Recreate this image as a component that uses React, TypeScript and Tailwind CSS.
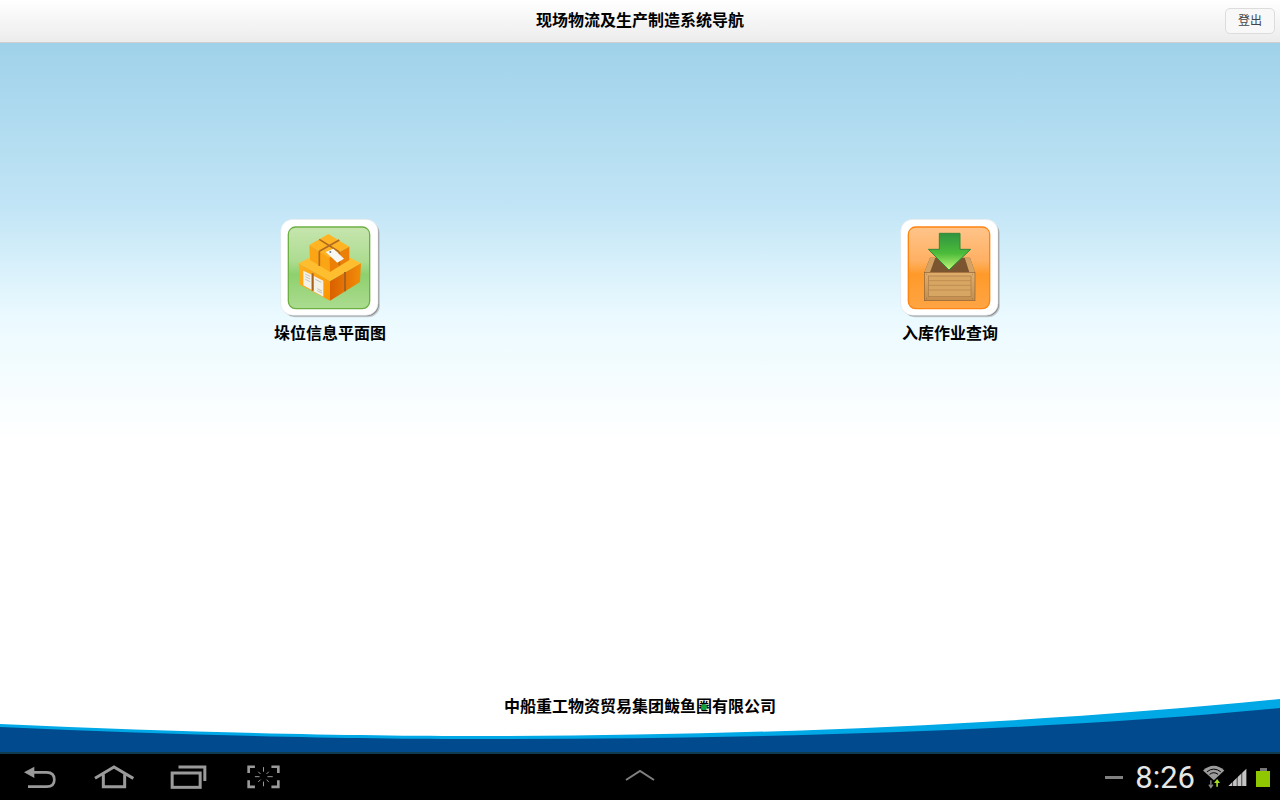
import type { ReactNode } from "react";

const cjk = "font-['Liberation_Sans','Noto_Sans_CJK_SC',sans-serif]";

function TileFrame() {
  return (
    <>
      <rect x="70" y="36" width="290" height="286" rx="36" fill="#c4cdd2" />
      <rect x="67" y="33" width="290" height="286" rx="36" fill="#8e8e8e" />
      <rect x="62" y="28" width="292" height="288" rx="36" fill="#fff" stroke="#dfe6ea" strokeWidth="2" />
    </>
  );
}

function BoxesIcon() {
  return (
    <svg viewBox="60 24 300 300" className="w-[100px] h-[100px]">
      <defs>
        <linearGradient id="greenBg" x1="0" y1="0" x2="0" y2="1">
          <stop offset="0" stopColor="#c6e5ae" />
          <stop offset="0.42" stopColor="#addc90" />
          <stop offset="0.58" stopColor="#8fd06e" />
          <stop offset="1" stopColor="#abdc90" />
        </linearGradient>
        <linearGradient id="boxLeft" x1="0" y1="0" x2="1" y2="1">
          <stop offset="0" stopColor="#ffb020" />
          <stop offset="1" stopColor="#fb9400" />
        </linearGradient>
        <linearGradient id="boxRight" x1="0" y1="0" x2="1" y2="0">
          <stop offset="0" stopColor="#d96000" />
          <stop offset="1" stopColor="#f28c08" />
        </linearGradient>
      </defs>
      <TileFrame />
      <rect x="85" y="51" width="244" height="245" rx="22" fill="url(#greenBg)" stroke="#6cb044" strokeWidth="4" />
      {/* bottom box */}
      <polygon points="116,160 210,112 303,160 210,214" fill="#ffbe30" />
      <polygon points="116,160 210,214 210,272 120,224" fill="url(#boxLeft)" />
      <polygon points="210,214 303,160 300,216 210,272" fill="url(#boxRight)" />
      <polygon points="130,182 155,194 155,240 130,226" fill="#f4f1e6" />
      <polygon points="160,197 190,212 190,260 160,244" fill="#f4f1e6" />
      <path d="M136 192 L150 199 M136 200 L150 207 M136 208 L150 215 M166 208 L184 217 M172 236 L186 243 M172 242 L186 249" stroke="#a8a8a8" strokeWidth="2" />
      <path d="M158 190 L158 242 M255 186 L255 244" stroke="#a8621e" strokeWidth="6" fill="none" />
      {/* top box */}
      <polygon points="148,105 205,72 268,110 208,143" fill="#ffb424" />
      <polygon points="148,105 208,143 210,186 150,150" fill="#fba414" />
      <polygon points="208,143 268,110 268,150 210,186" fill="#ec8006" />
      <path d="M178 88 L238 126 M238 90 L178 124 M178 124 L178 168 M238 126 L238 166" stroke="#b06a22" strokeWidth="5" fill="none" />
      <polygon points="197,126 220,116 252,146 232,158" fill="#f6f6f2" />
      <circle cx="211" cy="126" r="3" fill="#777" />
    </svg>
  );
}

function CrateIcon() {
  return (
    <svg viewBox="60 24 300 300" className="w-[100px] h-[100px]">
      <defs>
        <linearGradient id="orangeBg" x1="0" y1="0" x2="0" y2="1">
          <stop offset="0" stopColor="#ffc48a" />
          <stop offset="0.42" stopColor="#ffb062" />
          <stop offset="0.58" stopColor="#ff9a2a" />
          <stop offset="1" stopColor="#ffa544" />
        </linearGradient>
        <linearGradient id="arrowFill" x1="0" y1="0" x2="0" y2="1">
          <stop offset="0" stopColor="#2f9440" />
          <stop offset="0.55" stopColor="#4cbc3a" />
          <stop offset="1" stopColor="#c4f878" />
        </linearGradient>
        <linearGradient id="wood" x1="0" y1="0" x2="0" y2="1">
          <stop offset="0" stopColor="#e0ae6c" />
          <stop offset="1" stopColor="#c48e4e" />
        </linearGradient>
      </defs>
      <TileFrame />
      <rect x="85" y="51" width="244" height="245" rx="22" fill="url(#orangeBg)" stroke="#ff8410" strokeWidth="4" />
      {/* crate */}
      <polygon points="150,143 270,143 285,187 133,187" fill="#7a5530" />
      <polygon points="150,143 166,143 150,187 133,187" fill="#d3a264" />
      <polygon points="254,143 270,143 285,187 268,187" fill="#d3a264" />
      <rect x="133" y="187" width="152" height="85" fill="url(#wood)" stroke="#8d6236" strokeWidth="2" />
      <rect x="145" y="198" width="128" height="62" fill="#d8a663" stroke="#a87a46" strokeWidth="2" />
      <path d="M145 212 H273 M145 226 H273 M145 240 H273" stroke="#b58448" strokeWidth="2" />
      <path d="M139 193 h1 M278 193 h1 M139 266 h1 M278 266 h1" stroke="#5c3c1c" strokeWidth="3" />
      {/* arrow */}
      <polygon points="178,70 240,70 240,118 272,118 207,180 145,118 178,118" fill="url(#arrowFill)" stroke="#2f8a3a" strokeWidth="3" strokeLinejoin="round" />
    </svg>
  );
}

function Tile({ icon, label }: { icon: ReactNode; label: string }) {
  return (
    <div className="flex flex-col items-center">
      {icon}
      <div className={`mt-[6px] text-base leading-5 font-bold text-black ${cjk}`}>{label}</div>
    </div>
  );
}

function NavIcons() {
  return (
    <div className="flex items-center">
      <svg viewBox="66 40 105 72" className="ml-[22px] w-[35px] h-[24px]" fill="none" stroke="#9a9a9a" strokeWidth="8">
        <path d="M98 62 H140 Q163 62 163 84 Q163 105 140 105 H84" />
        <polygon points="72,62 103,45 103,79" fill="#9a9a9a" stroke="none" />
      </svg>
      <svg viewBox="280 42 120 72" className="ml-[37px] w-[40px] h-[24px]" fill="none" stroke="#9a9a9a" strokeWidth="9">
        <path d="M283 82 L340 48 L398 82" />
        <path d="M308 70 V107 H372 V70" />
      </svg>
      <svg viewBox="510 40 110 72" className="ml-[36px] w-[37px] h-[24px]" fill="none" stroke="#9a9a9a" strokeWidth="9">
        <rect x="516" y="64" width="84" height="43" />
        <path d="M535 46 H614 V88" />
      </svg>
      <svg viewBox="740 42 100 72" className="ml-[40px] w-[33px] h-[24px]" fill="none" stroke="#9a9a9a">
        <path d="M764 47 H745 V66 M814 47 H835 V66 M745 88 V108 H764 M835 88 V108 H814" strokeWidth="8" />
        <path d="M790 48 V62 M790 92 V106 M764 77 H778 M802 77 H818 M774 62 L781 69 M806 62 L799 69 M774 93 L781 86 M806 93 L799 86" strokeWidth="3" />
      </svg>
    </div>
  );
}

function StatusArea() {
  return (
    <div className="flex items-center justify-end">
      <div className="w-[18px] h-[3px] bg-[#808080]" />
      <span className="ml-[12px] text-[31px] leading-none text-[#e6e6e6] font-['Roboto',sans-serif] font-normal">8:26</span>
      <svg viewBox="335 38 70 72" className="ml-[7px] w-[23px] h-[24px]">
        <path d="M338 54 Q371 26 403 54 L371 84 Z" fill="#9c9c9c" />
        <path d="M350 58 Q371 42 392 58 M358 66 Q371 56 384 66" stroke="#000" strokeWidth="3" fill="none" />
        <path d="M362 84 V104 M356 97 L362 106 L368 97" stroke="#8a8a8a" strokeWidth="4" fill="none" />
        <path d="M381 104 V90" stroke="#a4e01c" strokeWidth="5" />
        <polygon points="372,92 381,80 390,92" fill="#a4e01c" />
      </svg>
      <svg viewBox="412 48 62 58" className="ml-[2px] w-[21px] h-[19px]">
        <polygon points="415,103 470,50 470,103" fill="#c4c4c4" />
        <path d="M428 103 V85 M442 103 V70 M456 103 V55" stroke="#000" strokeWidth="2" />
      </svg>
      <div className="ml-[8px] mr-[10px] flex flex-col items-center">
        <div className="w-[7px] h-[3px] bg-[#777]" />
        <div className="w-[14px] h-[16px] bg-[#8fc800]" />
      </div>
    </div>
  );
}

export default function App() {
  return (
    <div className={`w-[1280px] h-[800px] flex flex-col overflow-hidden bg-white ${cjk}`}>
      <header className="h-[43px] shrink-0 grid grid-cols-[1fr_auto_1fr] items-center border-b border-[#cfcfcf] bg-gradient-to-b from-white to-[#ececec]">
        <div />
        <h1 className="text-base font-bold text-black">现场物流及生产制造系统导航</h1>
        <div className="flex justify-end pr-[5px]">
          <button className="w-[50px] h-[26px] rounded-[5px] border border-[#dcdcdc] bg-[#f8f8f8] text-xs text-[#444]">登出</button>
        </div>
      </header>

      <main className="relative flex-1 flex flex-col bg-[linear-gradient(#9fd2ea_0px,#c2e5f6_165px,#ebfaff_275px,#ffffff_400px)]">
        <div className="grid grid-cols-2 px-5 pt-[175px]">
          <Tile icon={<BoxesIcon />} label="垛位信息平面图" />
          <Tile icon={<CrateIcon />} label="入库作业查询" />
        </div>
        <div className="mt-auto pb-[35px] text-center text-base leading-5 font-bold text-black relative z-10">
          中船重工物资贸易集团鲅鱼
          <span className="relative inline-block">
            圈
            <span className="absolute left-[5px] top-[7px] w-[6px] h-[6px] rounded-full bg-[#10a040]" />
          </span>
          有限公司
        </div>
        {/* wave drawn over the bottom of the page */}
        <svg viewBox="0 0 1280 54" preserveAspectRatio="none" className="absolute left-0 bottom-0 w-[1280px] h-[54px]">
          <path d="M0 26 C 200 35 360 38 480 38 C 760 38 1040 25 1280 1 V54 H0 Z" fill="#00a8e6" />
          <path d="M0 29 C 200 38 360 41 480 41 C 760 41 1040 33 1280 10 V54 H0 Z" fill="#004a8d" />
        </svg>
      </main>

      <footer className="h-[48px] shrink-0 grid grid-cols-[1fr_auto_1fr] items-center bg-black border-t-2 border-[#0f3a50]">
        <NavIcons />
        <svg viewBox="0 0 32 14" className="mb-[4px] w-[32px] h-[14px]" fill="none" stroke="#808080" strokeWidth="2">
          <path d="M2 12 L16 3 L30 12" />
        </svg>
        <StatusArea />
      </footer>
    </div>
  );
}
